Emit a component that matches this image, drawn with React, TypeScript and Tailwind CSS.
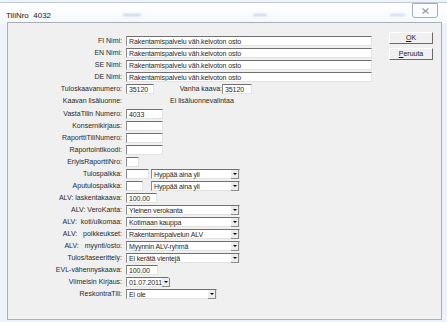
import React from "react";

const font = "font-['Liberation_Sans',Arial,sans-serif]";

const Box = ({ w, text = "" }: { w: number; text?: string }) => (
  <div
    className="shrink-0 h-[10px] bg-white border-t border-l border-t-[#707070] border-l-[#8e8e8e] border-b border-r border-b-[#e3e3e3] border-r-[#e3e3e3] pl-[2px] text-[7px] leading-[9px] text-[#262626] tracking-[-0.1px] whitespace-nowrap overflow-hidden"
    style={{ width: w }}
  >
    {text}
  </div>
);

const Combo = ({ w, text }: { w: number; text: string }) => (
  <div
    className="shrink-0 h-[10px] flex bg-white border-t border-l border-t-[#707070] border-l-[#8e8e8e] border-b border-r border-b-[#e3e3e3] border-r-[#e3e3e3] text-[7px] leading-[9px] text-[#262626] tracking-[-0.15px] whitespace-nowrap"
    style={{ width: w }}
  >
    <div className="flex-1 pl-[2px] overflow-visible">{text}</div>
    <div className="shrink-0 w-[8px] h-[9px] bg-[#ececec] border-r border-b border-[#8c8c8c] flex items-center justify-center">
      <div className="w-0 h-0 border-l-[2px] border-r-[2px] border-t-[2px] border-l-transparent border-r-transparent border-t-black" />
    </div>
  </div>
);

const Row = ({ label, children, h = 12 }: { label: string; children?: React.ReactNode; h?: number }) => (
  <div className="flex items-center" style={{ height: h }}>
    <div className="shrink-0 w-[114px] text-right text-[7px] text-[#2a2a2a] whitespace-pre">{label}</div>
    <div className="shrink-0 ml-[4px] flex items-center">{children}</div>
  </div>
);

export default function App() {
  return (
    <div className={`${font} w-[447px] h-[322px] relative overflow-hidden bg-[#eef3f9] text-black`}>
      {/* title bar */}
      <div className="h-[22px] border-t border-[#c3cad3] mt-[2px] bg-gradient-to-b from-white to-[#f4f8fc] flex items-center pl-[6px]">
        <span className="text-[8px] text-[#1a1a1a] mt-[4px]">TiliNro&nbsp;&nbsp;4032</span>
      </div>
      <div className="absolute left-[123px] top-[14px] w-[18px] h-[2px] rounded bg-[#b9cfea] blur-[1px]" />
      <div className="absolute left-[253px] top-[14px] w-[14px] h-[2px] rounded bg-[#bed2ec] blur-[1px]" />
      <div className="absolute left-[390px] top-[14px] w-[15px] h-[2px] rounded bg-[#c5d7ee] blur-[1px]" />
      <div className="absolute left-[412px] top-[3px] w-[26px] h-[15px] bg-[#fbfcfe] border border-[#a4afbc] rounded-b-[3px] flex items-center justify-center">
        <svg width="7" height="6" viewBox="0 0 7 6">
          <path d="M0.5 0.5 L6.5 5.5 M6.5 0.5 L0.5 5.5" stroke="#959aa1" strokeWidth="1.2" fill="none" />
        </svg>
      </div>

      {/* client */}
      <div className="absolute left-[7px] top-[22px] w-[435px] h-[298px] bg-[#f0f0f0] border border-[#a9afb8] flex">
        <div className="flex-1 flex flex-col pt-[12px]">
          <Row label="FI Nimi:"><Box w={246} text="Rakentamispalvelu väh.kelvoton osto" /></Row>
          <Row label="EN Nimi:"><Box w={246} text="Rakentamispalvelu väh.kelvoton osto" /></Row>
          <Row label="SE Nimi:"><Box w={246} text="Rakentamispalvelu väh.kelvoton osto" /></Row>
          <Row label="DE Nimi:"><Box w={246} text="Rakentamispalvelu väh.kelvoton osto" /></Row>
          <Row label="Tuloskaavanumero:">
            <Box w={28} text="35120" />
            <span className="shrink-0 w-[68px] text-right text-[7px] text-[#2a2a2a] whitespace-nowrap">Vanha kaava:</span>
            <Box w={30} text="35120" />
          </Row>
          <Row label="Kaavan lisäluonne:" h={13}>
            <span className="ml-[44px] text-[7px] text-[#2a2a2a] whitespace-nowrap">Ei lisäluonnevalintaa</span>
          </Row>
          <Row label="VastaTilin Numero:"><Box w={37} text="4033" /></Row>
          <Row label="Konsernikirjaus:"><Box w={37} /></Row>
          <Row label="RaporttiTiliNumero:"><Box w={37} /></Row>
          <Row label="Raportointikoodi:"><Box w={37} /></Row>
          <Row label="EriyisRaporttiNro:"><Box w={13} /></Row>
          <Row label="Tulospaikka:">
            <Box w={23} />
            <div className="ml-[2px]"><Combo w={89} text="Hyppää aina yli" /></div>
          </Row>
          <Row label="Aputulospaikka:">
            <Box w={17} />
            <div className="ml-[8px]"><Combo w={89} text="Hyppää aina yli" /></div>
          </Row>
          <Row label="ALV: laskentakaava:"><Box w={31} text="100.00" /></Row>
          <Row label="ALV: VeroKanta:"><Combo w={114} text="Yleinen verokanta" /></Row>
          <Row label="ALV:  koti/ulkomaa:"><Combo w={114} text="Kotimaan kauppa" /></Row>
          <Row label="ALV:   poikkeukset:"><Combo w={114} text="Rakentamispalvelun ALV" /></Row>
          <Row label="ALV:   myynti/osto:"><Combo w={114} text="Myynnin ALV-ryhmä" /></Row>
          <Row label="Tulos/taseerittely:"><Combo w={114} text="Ei kerätä vientejä" /></Row>
          <Row label="EVL-vähennyskaava:"><Box w={32} text="100.00" /></Row>
          <Row label="Viimeisin Kirjaus:"><Combo w={43} text="01.07.2011" /></Row>
          <Row label="ReskontraTili:"><Combo w={91} text="Ei ole" /></Row>
        </div>

        <div className="w-[44px] mr-[8px] pt-[9px] flex flex-col gap-[4px]">
          <button className="h-[12px] bg-[#f0f0f0] border-t border-l border-white border-r border-b border-r-[#6a6a6a] border-b-[#6a6a6a] text-[7px] leading-[10px] text-[#1a1a1a]">
            <span className="underline">O</span>K
          </button>
          <button className="h-[12px] bg-[#f0f0f0] border-t border-l border-white border-r border-b border-r-[#6a6a6a] border-b-[#6a6a6a] text-[7px] leading-[10px] text-[#1a1a1a]">
            <span className="underline">P</span>eruuta
          </button>
        </div>
      </div>
    </div>
  );
}
